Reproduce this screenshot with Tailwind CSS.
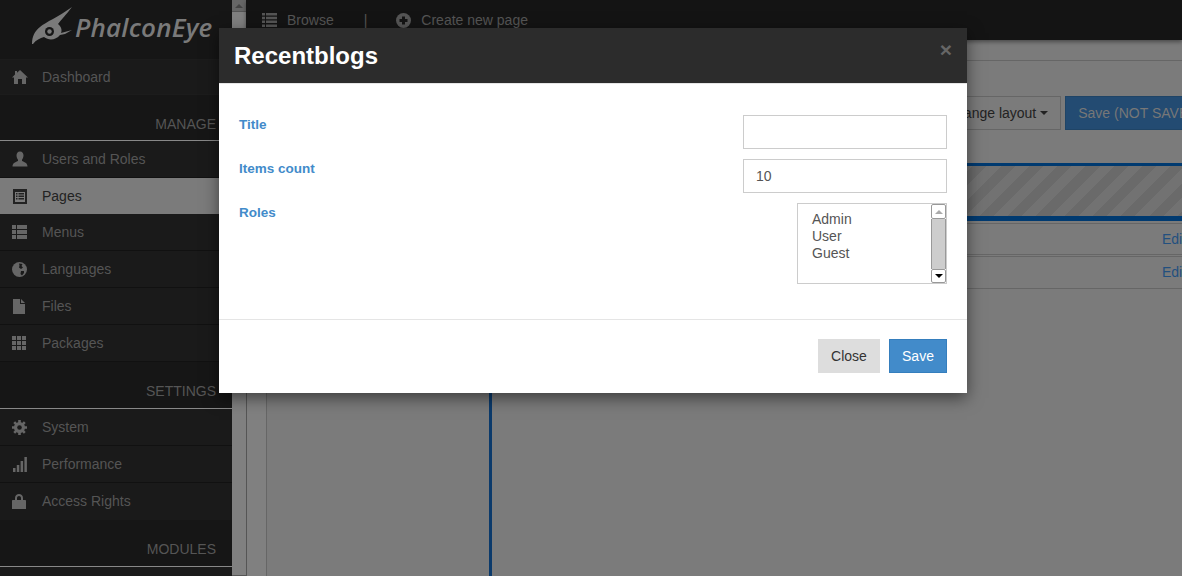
<!DOCTYPE html>
<html>
<head>
<meta charset="utf-8">
<script src="https://cdn.jsdelivr.net/npm/@tailwindcss/browser@4"></script>
</head>
<body class="m-0 overflow-hidden bg-[#7b7b7b] font-['Liberation_Sans',Arial,sans-serif]">
<div class="relative flex h-[576px] w-[1182px] overflow-hidden">
  <!-- Sidebar -->
  <aside class="flex h-full w-[232px] shrink-0 flex-col bg-[#161616] text-[14px] text-[#555]">
    <div class="flex h-[59px] shrink-0 items-start pl-[32px] pt-[7px]">
      <svg width="40" height="38" viewBox="0 0 40 38" class="mt-0 shrink-0"><path fill="#7a7a7a" d="M0 37 C0 29 3 24 8 20 C14 15 26 10 40 0 C34 8 29 13 26 17 C30 20 30 24 29 26 L40 23 L33 27 L28 28 C24 33 17 34 12 30 C8 31 4 33 1 37 Z"/><circle cx="17.5" cy="24.5" r="4.5" fill="#161616"/><circle cx="17.5" cy="24.5" r="2.2" fill="#7a7a7a"/></svg>
      <span class="ml-[3px] mt-[4px] font-['Open_Sans',sans-serif] text-[26px] font-semibold italic leading-[32px] tracking-[0.2px] text-[#7a7a7a]">PhalconEye</span>
    </div>
    <div class="flex h-[36px] shrink-0 items-center border-y border-[#1c1c1c] bg-[#1a1a1a]">
      <svg class="ml-[12px] h-[16px] w-[16px] fill-[#666]" viewBox="0 0 16 16"><path d="M8 1 L16 8.5 L14 8.5 L14 15 L10 15 L10 10 L6 10 L6 15 L2 15 L2 8.5 L0 8.5 L3 5.6 L3 2 L5 2 L5 3.8 Z"/></svg>
      <span class="ml-[14px]">Dashboard</span>
    </div>
    <div class="flex h-[46px] shrink-0 items-end justify-end border-b border-[#888] pb-[8px] pr-[16px] leading-[16px]">MANAGE</div>
    <div class="flex h-[37px] shrink-0 items-center border-b border-[#111] bg-[#1a1a1a]">
      <svg class="ml-[12px] h-[16px] w-[16px] fill-[#666]" viewBox="0 0 16 16"><path d="M8 0.5 C10.4 0.5 11.5 2.4 11.5 4.6 C11.5 6.5 10.6 8 10 8.8 L10 10 C12 11 15.5 11.6 15.5 15.5 L0.5 15.5 C0.5 11.6 4 11 6 10 L6 8.8 C5.4 8 4.5 6.5 4.5 4.6 C4.5 2.4 5.6 0.5 8 0.5 Z"/></svg>
      <span class="ml-[14px]">Users and Roles</span>
    </div>
    <div class="flex h-[36px] shrink-0 items-center bg-[#7b7b7b] text-[#222]">
      <svg class="ml-[13px] h-[15px] w-[14px]" viewBox="0 0 14 15"><path fill="#222" fill-rule="evenodd" d="M0 0 H14 V15 H0 Z M2 3 V13 H12 V3 Z"/><path fill="#222" d="M3 4 H4.5 V5.5 H3 Z M5.5 4 H11 V5.5 H5.5 Z M3 6.5 H4.5 V8 H3 Z M5.5 6.5 H11 V8 H5.5 Z M3 9 H4.5 V10.5 H3 Z M5.5 9 H11 V10.5 H5.5 Z"/></svg>
      <span class="ml-[15px]">Pages</span>
    </div>
    <div class="flex h-[37px] shrink-0 items-center border-b border-[#111] bg-[#1a1a1a]">
      <svg class="ml-[12px] h-[14px] w-[15px] fill-[#666]" viewBox="0 0 15 14"><path d="M0 0 H4 V4 H0 Z M5 0 H15 V4 H5 Z M0 5 H4 V9 H0 Z M5 5 H15 V9 H5 Z M0 10 H4 V14 H0 Z M5 10 H15 V14 H5 Z"/></svg>
      <span class="ml-[15px]">Menus</span>
    </div>
    <div class="flex h-[37px] shrink-0 items-center border-b border-[#111] bg-[#1a1a1a]">
      <svg class="ml-[12px] h-[15px] w-[15px]" viewBox="0 0 15 15"><circle cx="7.5" cy="7.5" r="7.5" fill="#666"/><path fill="#1a1a1a" d="M7 1.5 L10.5 2 L9.5 4 L11 5.5 L9 7 L7 5.5 L7.5 3.5 Z M9 9 L12 9 L12 11 L10 13.5 L8.5 12 Z"/></svg>
      <span class="ml-[15px]">Languages</span>
    </div>
    <div class="flex h-[37px] shrink-0 items-center border-b border-[#111] bg-[#1a1a1a]">
      <svg class="ml-[13px] h-[15px] w-[12px] fill-[#666]" viewBox="0 0 12 15"><path d="M0 0 H7 V5 H12 V15 H0 Z M8 0 L12 4 H8 Z"/></svg>
      <span class="ml-[17px]">Files</span>
    </div>
    <div class="flex h-[37px] shrink-0 items-center border-b border-[#111] bg-[#1a1a1a]">
      <svg class="ml-[12px] h-[14px] w-[14px] fill-[#666]" viewBox="0 0 14 14"><path d="M0 0 H4 V4 H0 Z M5 0 H9 V4 H5 Z M10 0 H14 V4 H10 Z M0 5 H4 V9 H0 Z M5 5 H9 V9 H5 Z M10 5 H14 V9 H10 Z M0 10 H4 V14 H0 Z M5 10 H9 V14 H5 Z M10 10 H14 V14 H10 Z"/></svg>
      <span class="ml-[16px]">Packages</span>
    </div>
    <div class="flex h-[47px] shrink-0 items-end justify-end border-b border-[#888] pb-[9px] pr-[16px] leading-[16px]">SETTINGS</div>
    <div class="flex h-[37px] shrink-0 items-center border-b border-[#111] bg-[#1a1a1a]">
      <svg class="ml-[12px] h-[15px] w-[15px]" viewBox="0 0 15 15"><circle cx="7.5" cy="7.5" r="5.5" fill="#666"/><path stroke="#666" stroke-width="2.6" d="M7.5 0 V15 M0 7.5 H15 M2.2 2.2 L12.8 12.8 M12.8 2.2 L2.2 12.8"/><circle cx="7.5" cy="7.5" r="2.3" fill="#1a1a1a"/></svg>
      <span class="ml-[15px]">System</span>
    </div>
    <div class="flex h-[37px] shrink-0 items-center border-b border-[#111] bg-[#1a1a1a]">
      <svg class="ml-[13px] h-[15px] w-[14px] fill-[#666]" viewBox="0 0 14 15"><path d="M0 11 H2.5 V15 H0 Z M3.8 8 H6.3 V15 H3.8 Z M7.6 4 H10.1 V15 H7.6 Z M11.4 0 H13.9 V15 H11.4 Z"/></svg>
      <span class="ml-[15px]">Performance</span>
    </div>
    <div class="flex h-[37px] shrink-0 items-center bg-[#1a1a1a]">
      <svg class="ml-[12px] h-[15px] w-[14px] fill-[#666]" viewBox="0 0 14 15"><path fill-rule="evenodd" d="M1 6 H3 V4 C3 1.5 5 0 7 0 C9 0 11 1.5 11 4 V6 H13 C13.6 6 14 6.4 14 7 V15 H0 V7 C0 6.4 .4 6 1 6 Z M5 6 H9 V4 C9 2.8 8 2 7 2 C6 2 5 2.8 5 4 Z"/></svg>
      <span class="ml-[16px]">Access Rights</span>
    </div>
    <div class="flex h-[47px] shrink-0 items-end justify-end border-b border-[#888] pb-[9px] pr-[16px] leading-[16px]">MODULES</div>
    <div class="flex-1 bg-[#1a1a1a]"></div>
  </aside>

  <!-- Page scrollbar -->
  <div class="flex w-[14px] shrink-0 flex-col bg-[#777]">
    <div class="flex h-[11px] items-center justify-center bg-[#666]">
      <div class="h-0 w-0 border-x-[4px] border-b-[4px] border-x-transparent border-b-[#444]"></div>
    </div>
    <div class="flex-1 border-y border-[#555] bg-[#808080]"></div>
  </div>

  <!-- Main -->
  <main class="flex min-w-0 flex-1 flex-col">
    <div class="flex h-[40px] shrink-0 items-center bg-[#141414] pt-[0px] text-[14px] text-[#555] shadow-[0_2px_4px_rgba(0,0,0,0.4)]">
      <svg class="ml-[16px] h-[14px] w-[15px] fill-[#555]" viewBox="0 0 15 14"><path d="M0 0 H3 V2.5 H0 Z M4 0 H15 V2.5 H4 Z M0 3.8 H3 V6.3 H0 Z M4 3.8 H15 V6.3 H4 Z M0 7.6 H3 V10.1 H0 Z M4 7.6 H15 V10.1 H4 Z M0 11.4 H3 V14 H0 Z M4 11.4 H15 V14 H4 Z"/></svg>
      <span class="ml-[10px]">Browse</span>
      <span class="ml-[30px]">|</span>
      <svg class="ml-[29px] h-[15px] w-[15px]" viewBox="0 0 15 15"><circle cx="7.5" cy="7.5" r="7.5" fill="#555"/><path stroke="#141414" stroke-width="3" d="M7.5 3.5 V11.5 M3.5 7.5 H11.5"/></svg>
      <span class="ml-[10px]">Create new page</span>
    </div>
    <div class="flex min-h-0 flex-1">
      <div class="w-[21px] shrink-0 border-x border-x-[#555] border-r-[#666] bg-[#808080]"></div>
      <div class="flex min-w-0 flex-1 flex-col overflow-hidden">
        <div class="mt-[20px] shrink-0 border-t border-[#666]"></div>
        <div class="mt-[35px] flex h-[34px] shrink-0 justify-end gap-[4px]">
          <div class="flex items-center border border-[#666] bg-[#7b7b7b] px-[12px] text-[14px] whitespace-nowrap text-[#222]">Change layout<span class="ml-[4px] h-0 w-0 border-x-[4px] border-t-[4px] border-x-transparent border-t-[#222]"></span></div>
          <div class="-mr-[34px] flex items-center border border-[#1f4466] bg-[#234b72] px-[12px] text-[14px] whitespace-nowrap text-[#777]">Save (NOT SAVED)</div>
        </div>
        <div class="flex flex-1 min-h-0 pt-[33px]">
          <div class="w-[222px] shrink-0"></div>
          <div class="flex min-w-0 flex-1 flex-col border-l-[3px] border-[#0b3a6b]">
            <div class="h-[3px] shrink-0 bg-[#003a70]"></div>
            <div class="h-[50px] shrink-0 bg-[repeating-linear-gradient(135deg,#6a6a6a_0,#6a6a6a_10px,#727272_10px,#727272_20px)]"></div>
            <div class="h-[5px] shrink-0 bg-[#003a70]"></div>
            <div class="mt-[2px] flex h-[32px] shrink-0 items-center justify-end border-y border-[#666] text-[14px] text-[#23507f]"><span class="-mr-[4px]">Edit</span></div>
            <div class="mt-[1px] flex h-[33px] shrink-0 items-center justify-end border-y border-[#666] text-[14px] text-[#23507f]"><span class="-mr-[4px]">Edit</span></div>
          </div>
        </div>
      </div>
    </div>
  </main>

  <!-- Modal -->
  <div class="absolute left-[219px] top-[28px] flex h-[365px] w-[748px] flex-col bg-white shadow-[0_5px_15px_rgba(0,0,0,0.5)]">
    <div class="flex h-[56px] shrink-0 items-center justify-between border-b border-[#e5e5e5] bg-[#2c2c2c] pl-[15px] pr-[15px]">
      <h3 class="text-[24px] font-bold leading-[26px] text-white">Recentblogs</h3>
      <span class="-mt-[12px] text-[21px] font-bold leading-[21px] text-[#666]">×</span>
    </div>
    <div class="flex flex-1 flex-col gap-[10px] px-[20px] pt-[31px]">
      <div class="flex h-[34px] items-start justify-between">
        <label class="text-[13.5px] font-bold leading-[20px] text-[#428bca]">Title</label>
        <input type="text" class="h-[34px] w-[204px] border border-[#ccc] bg-white px-[12px] text-[14px] text-[#555]">
      </div>
      <div class="flex h-[34px] items-start justify-between">
        <label class="text-[13.5px] font-bold leading-[20px] text-[#428bca]">Items count</label>
        <input type="text" value="10" class="h-[34px] w-[204px] border border-[#ccc] bg-white px-[12px] text-[14px] text-[#555]">
      </div>
      <div class="flex items-start justify-between">
        <label class="text-[13.5px] font-bold leading-[20px] text-[#428bca]">Roles</label>
        <div class="flex h-[81px] w-[150px] justify-between border border-[#ccc] bg-white">
          <div class="pl-[14px] pt-[7px] text-[14px] leading-[17px] text-[#555]">
            <div>Admin</div><div>User</div><div>Guest</div>
          </div>
          <div class="flex w-[15px] flex-col">
            <div class="flex h-[15px] items-center justify-center rounded-[2px] border border-[#999] bg-white"><div class="h-0 w-0 border-x-[4px] border-b-[4px] border-x-transparent border-b-[#aaa]"></div></div>
            <div class="flex-1 border-x border-[#999] bg-[#cdcdcd]"></div>
            <div class="flex h-[14px] items-center justify-center rounded-[2px] border border-[#999] bg-white"><div class="h-0 w-0 border-x-[4px] border-t-[4px] border-x-transparent border-t-black"></div></div>
          </div>
        </div>
      </div>
    </div>
    <div class="flex h-[74px] shrink-0 items-start justify-end gap-[9px] border-t border-[#e5e5e5] pr-[20px] pt-[19px] text-[14px]">
      <button class="h-[34px] w-[62px] bg-[#ddd] text-[#333]">Close</button>
      <button class="h-[34px] w-[58px] border border-[#357ebd] bg-[#428bca] text-white">Save</button>
    </div>
  </div>
</div>
</body>
</html>
